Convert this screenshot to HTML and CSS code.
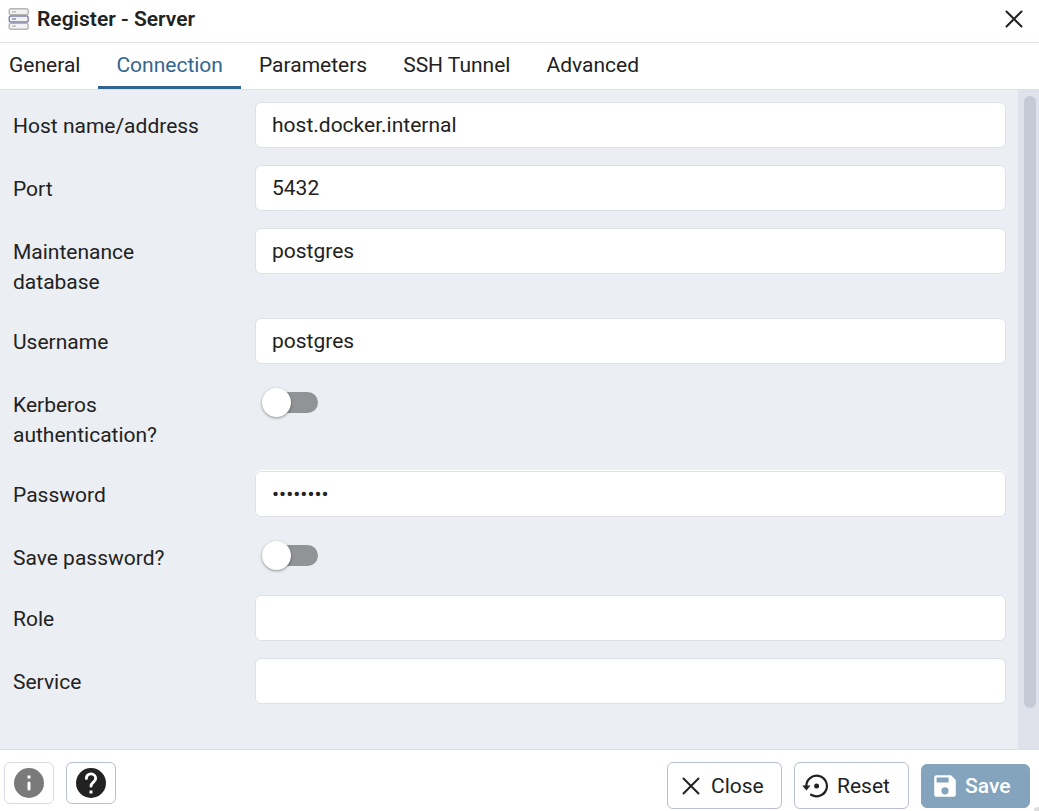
FILE: index.html
```html
<!DOCTYPE html>
<html lang="en">
<head>
<meta charset="utf-8">
<meta name="viewport" content="width=device-width, initial-scale=1">
<title>Register - Server</title>
<link rel="stylesheet" href="styles.css">
</head>
<body>
<main class="dialog">
  <header class="dialog-header">
    <svg class="server-icon" viewBox="0 0 22 22" aria-hidden="true">
      <g fill="#f2f2f2" stroke-width="1.4">
        <rect x="1.2" y="0.8" width="19" height="6" rx="1.8" stroke="#b5b5b5"/>
        <rect x="1.2" y="15.2" width="19" height="6" rx="1.8" stroke="#b5b5b5"/>
        <rect x="1.2" y="8" width="19" height="6" rx="1.8" stroke="#8181ad"/>
      </g>
      <path d="M4 3.8h4M4 18.2h4" stroke="#b5b5b5" stroke-width="1.3"/>
      <path d="M4 11h4" stroke="#8181ad" stroke-width="1.3"/>
    </svg>
    <h1 class="dialog-title">Register - Server</h1>
    <button class="header-close" type="button" aria-label="Close dialog">
      <svg class="cross-icon" viewBox="0 0 18 18" aria-hidden="true"><path d="M1.5 1.5l15 15M16.5 1.5l-15 15"/></svg>
    </button>
  </header>
  <div class="tabs" role="tablist">
    <button class="tab" type="button" role="tab">General</button>
    <button class="tab tab-active" type="button" role="tab" aria-selected="true">Connection</button>
    <button class="tab" type="button" role="tab">Parameters</button>
    <button class="tab" type="button" role="tab">SSH Tunnel</button>
    <button class="tab" type="button" role="tab">Advanced</button>
  </div>
  <div class="panel">
    <form class="form" id="server-form">
      <div class="row">
        <label class="label" for="host">Host name/address</label>
        <input class="field" id="host" type="text" value="host.docker.internal">
      </div>
      <div class="row">
        <label class="label" for="port">Port</label>
        <input class="field" id="port" type="text" value="5432">
      </div>
      <div class="row">
        <label class="label" for="database">Maintenance database</label>
        <input class="field" id="database" type="text" value="postgres">
      </div>
      <div class="row">
        <label class="label" for="username">Username</label>
        <input class="field" id="username" type="text" value="postgres">
      </div>
      <div class="row">
        <label class="label" for="kerberos">Kerberos authentication?</label>
        <input class="switch" id="kerberos" type="checkbox" role="switch">
      </div>
      <div class="row">
        <label class="label" for="password">Password</label>
        <input class="field field-password" id="password" type="password" value="postgres" autocomplete="off">
      </div>
      <div class="row">
        <label class="label" for="save-password">Save password?</label>
        <input class="switch" id="save-password" type="checkbox" role="switch">
      </div>
      <div class="row">
        <label class="label" for="role">Role</label>
        <input class="field" id="role" type="text">
      </div>
      <div class="row">
        <label class="label" for="service">Service</label>
        <input class="field" id="service" type="text">
      </div>
    </form>
    <div class="scroll-track" aria-hidden="true"><div class="scroll-thumb"></div></div>
  </div>
  <footer class="footer">
    <div class="button-group">
      <button class="icon-button icon-button-muted" type="button" aria-label="Information" disabled>
        <svg class="round-icon" viewBox="2 2 20 20" aria-hidden="true"><circle cx="12" cy="12" r="10" fill="#7a7a7a"/><path fill="#fff" d="M11 7h2v2h-2z"/><path d="M12 12v4" stroke="#fff" stroke-width="2" stroke-linecap="round"/></svg>
      </button>
      <button class="icon-button" type="button" aria-label="Help">
        <svg class="round-icon" viewBox="2 2 20 20" aria-hidden="true"><circle cx="12" cy="12" r="10" fill="#222"/><path d="M8.900 9c0-1.900 1.300-3.100 3.100-3.100s3.100 1.300 3.100 3.100c0 2.200-3.100 2.700-3.100 5.100" fill="none" stroke="#fff" stroke-width="1.900" stroke-linecap="round"/><path fill="#fff" d="M11 17h2v2h-2z"/></svg>
      </button>
    </div>
    <div class="button-group">
      <button class="button" type="button">
        <svg class="button-icon cross-icon" viewBox="-3 -3 24 24" aria-hidden="true"><path d="M1.500 1.500l15 15M16.500 1.500l-15 15"/></svg>
        Close
      </button>
      <button class="button button-reset" type="reset" form="server-form">
        <svg class="button-icon button-icon-wide" viewBox="0 0 27 24" aria-hidden="true"><path d="M4.300 12A10.300 10.300 0 1 1 9.100 20.700" fill="none" stroke="#222" stroke-width="2.200" stroke-linecap="round"/><path fill="#222" d="M0.300 11.500h8.200l-4.100 5z"/><circle cx="14.600" cy="12" r="2.500" fill="#222"/></svg>
        Reset
      </button>
      <button class="button button-primary" type="button" disabled>
        <svg class="button-icon" viewBox="2 2 20 20" aria-hidden="true"><path fill="#fff" d="M17 3H5a2 2 0 0 0-2 2v14c0 1.100.900 2 2 2h14c1.100 0 2-.900 2-2V7l-4-4zm-5 16a3 3 0 1 1 0-6 3 3 0 0 1 0 6zm3-10H5V5h10v4z"/></svg>
        Save
      </button>
    </div>
  </footer>
  <div class="resize-grip" aria-hidden="true"></div>
</main>
</body>
</html>
```
FILE: styles.css
```css
* {
  box-sizing: border-box;
}

body {
  margin: 0;
  color: #222;
  background: #fff;
  font-family: Roboto, "Liberation Sans", sans-serif;
  font-size: 21px;
  line-height: 30px;
}

button,
input {
  font: inherit;
  color: inherit;
}

.dialog {
  position: relative;
  display: flex;
  flex-direction: column;
  min-height: 100vh;
}

.dialog-header {
  display: flex;
  align-items: center;
  gap: 7px;
  padding: 4px 16px 8px 8px;
  border-bottom: 1px solid #dde0e6;
}

.server-icon {
  width: 22px;
  height: 22px;
}

.dialog-title {
  flex: 1;
  margin: 0;
  font-size: 21px;
  font-weight: 600;
}

.header-close {
  display: flex;
  padding: 0;
  border: 0;
  background: none;
}

.cross-icon {
  width: 18px;
  height: 18px;
  fill: none;
  stroke: #222;
  stroke-width: 2;
  stroke-linecap: round;
}

.tabs {
  display: flex;
  border-bottom: 1px solid #dde0e6;
}

.tab {
  padding: 7px 18px 6px;
  border: 0;
  border-bottom: 3px solid transparent;
  background: none;
}

.tab:first-child {
  padding-left: 9px;
}

.tab-active {
  color: #326690;
  border-bottom-color: #326690;
}

.panel {
  flex: 1;
  display: flex;
  background: #ebeef3;
  border-bottom: 1px solid #dde0e6;
}

.form {
  flex: 1;
  display: flex;
  flex-direction: column;
  gap: 17px;
  padding: 12px 12px 12px 13px;
}

.row {
  display: grid;
  grid-template-columns: 242px 1fr;
  align-items: start;
}

.label {
  padding: 9px 32px 4px 0;
}

.field {
  width: 100%;
  height: 46px;
  padding: 0 16px;
  border: 1px solid #dde0e6;
  border-radius: 6px;
  background: #fff;
}

.field-password {
  box-shadow: 0 -1px #fff;
}

.switch {
  appearance: none;
  position: relative;
  width: 51px;
  height: 21px;
  margin: 11px 0 12px 12px;
  border-radius: 11px;
  background: #929397;
}

.switch::before {
  content: "";
  position: absolute;
  top: -4px;
  left: -5px;
  width: 29px;
  height: 29px;
  border-radius: 50%;
  background: #fff;
  box-shadow: 0 1px 3px rgba(0, 0, 0, 0.4);
}

.scroll-track {
  display: flex;
  width: 21px;
  padding: 6px 3px 41px 6px;
  background: #dfe2ea;
}

.scroll-thumb {
  flex: 1;
  border-radius: 6px;
  background: #c4cad5;
}

.footer {
  display: flex;
  justify-content: space-between;
  padding: 12px 9px 2px 4px;
}

.button-group {
  display: flex;
  align-items: center;
  gap: 12px;
}

.icon-button {
  display: flex;
  align-items: center;
  align-self: flex-start;
  justify-content: center;
  width: 50px;
  height: 42px;
  padding: 0;
  border: 1px solid #b9bfd0;
  border-radius: 6px;
  background: #fff;
}

.icon-button-muted {
  border-color: #d8dbe5;
}

.round-icon {
  width: 30px;
  height: 30px;
}

.button {
  display: flex;
  align-items: center;
  gap: 8px;
  width: 115px;
  height: 47px;
  padding: 0 0 0 11px;
  border: 1px solid #b9bfd0;
  border-radius: 6px;
  background: #fff;
}

.button-reset {
  padding-left: 7px;
}

.button-icon {
  width: 24px;
  height: 24px;
}

.button-icon-wide {
  width: 27px;
}

.button-primary {
  width: 109px;
  height: 44px;
  border-color: #84a3bc;
  background: #84a3bc;
  color: #fff;
  font-weight: 500;
}

.resize-grip {
  position: absolute;
  right: 0;
  bottom: 0;
  width: 5px;
  height: 4px;
  border-top-left-radius: 5px;
  background: #ddd;
}
```
